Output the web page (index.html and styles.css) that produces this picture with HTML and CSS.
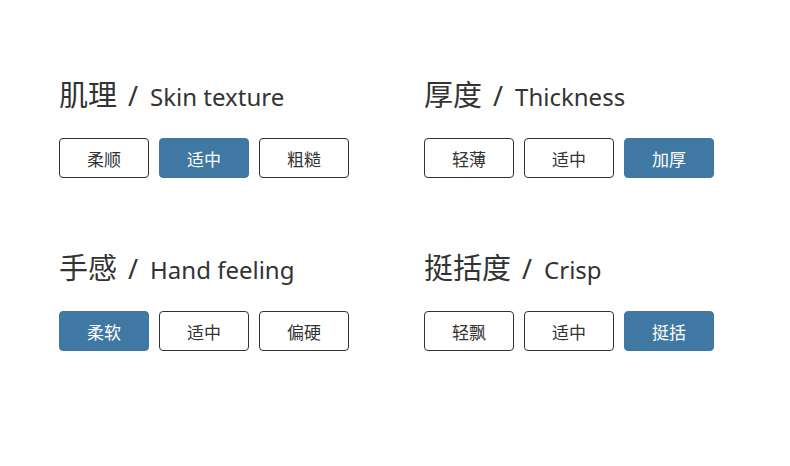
FILE: index.html
```html
<!DOCTYPE html>
<html lang="zh">
<head>
<meta charset="utf-8">
<link rel="stylesheet" href="styles.css">
</head>
<body>
<main class="grid">
  <section class="group">
    <h2 class="title"><span class="zh">肌理</span><span class="sep">/</span><span class="en">Skin texture</span></h2>
    <div class="options">
      <button class="opt">柔顺</button>
      <button class="opt active">适中</button>
      <button class="opt">粗糙</button>
    </div>
  </section>
  <section class="group">
    <h2 class="title"><span class="zh">厚度</span><span class="sep">/</span><span class="en">Thickness</span></h2>
    <div class="options">
      <button class="opt">轻薄</button>
      <button class="opt">适中</button>
      <button class="opt active">加厚</button>
    </div>
  </section>
  <section class="group">
    <h2 class="title"><span class="zh">手感</span><span class="sep">/</span><span class="en">Hand feeling</span></h2>
    <div class="options">
      <button class="opt active">柔软</button>
      <button class="opt">适中</button>
      <button class="opt">偏硬</button>
    </div>
  </section>
  <section class="group">
    <h2 class="title"><span class="zh">挺括度</span><span class="sep">/</span><span class="en">Crisp</span></h2>
    <div class="options">
      <button class="opt">轻飘</button>
      <button class="opt">适中</button>
      <button class="opt active">挺括</button>
    </div>
  </section>
</main>
</body>
</html>
```
FILE: styles.css
```css
html, body {
  margin: 0;
  padding: 0;
  background: #ffffff;
}
body {
  font-family: "Noto Sans", "Noto Sans CJK SC", sans-serif;
  color: #333333;
}
.grid {
  display: grid;
  grid-template-columns: 365px 365px;
  row-gap: 72px;
  padding: 77px 0 0 59px;
}
.title {
  margin: 0;
  height: 32px;
  line-height: 32px;
  font-weight: 400;
  display: flex;
  align-items: baseline;
  white-space: nowrap;
}
.zh {
  font-family: "Noto Sans CJK SC", sans-serif;
  font-size: 29px;
}
.sep {
  font-family: "Noto Sans", sans-serif;
  font-size: 27px;
  margin: 0 12px 0 11px;
}
.en {
  font-family: "Noto Sans", sans-serif;
  font-size: 24px;
}
.options {
  display: flex;
  gap: 10px;
  margin-top: 29px;
}
.opt {
  width: 90px;
  height: 40px;
  box-sizing: border-box;
  border: 1px solid #333333;
  border-radius: 4px;
  background: #ffffff;
  color: #333333;
  font-family: "Noto Sans CJK SC", sans-serif;
  font-size: 17px;
  font-weight: 400;
  padding: 0;
}
.opt.active {
  background: #3f78a2;
  border-color: #3f78a2;
  color: #ffffff;
}
```
